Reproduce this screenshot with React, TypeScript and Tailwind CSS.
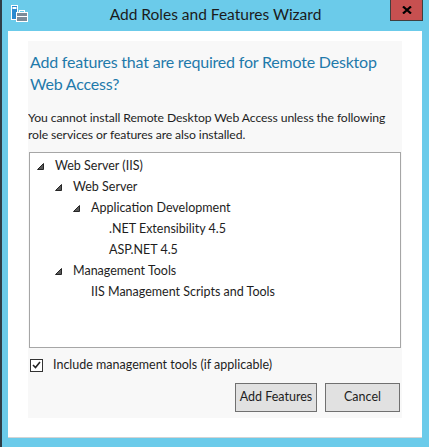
import React from 'react';

const font = { fontFamily: 'Lato, "Open Sans", sans-serif' };

interface Row {
  label: string;
  level: number;
  expandable: boolean;
}

const rows: Row[] = [
  { label: 'Web Server (IIS)', level: 0, expandable: true },
  { label: 'Web Server', level: 1, expandable: true },
  { label: 'Application Development', level: 2, expandable: true },
  { label: '.NET Extensibility 4.5', level: 3, expandable: false },
  { label: 'ASP.NET 4.5', level: 3, expandable: false },
  { label: 'Management Tools', level: 1, expandable: true },
  { label: 'IIS Management Scripts and Tools', level: 2, expandable: false },
];

const indent = ['pl-[7px]', 'pl-[25px]', 'pl-[43px]', 'pl-[61px]'];

function Expander() {
  return (
    <svg width="7" height="7" viewBox="0 0 7 7" className="shrink-0">
      <polygon points="6.5,0.5 6.5,6.5 0.5,6.5" fill="#595959" stroke="#262626" strokeWidth="1" />
    </svg>
  );
}

function AppIcon() {
  return (
    <svg width="18" height="18" viewBox="0 0 18 18">
      <rect x="1.5" y="0.5" width="6" height="14" fill="#2a8ad0" stroke="#fff" />
      <rect x="2.5" y="2" width="4" height="2" fill="#fff" />
      <rect x="6.5" y="7.5" width="11" height="9" fill="#7c8c99" stroke="#fff" />
      <rect x="9.5" y="5.5" width="5" height="2" fill="none" stroke="#fff" />
      <line x1="6.5" y1="11.5" x2="17.5" y2="11.5" stroke="#fff" />
    </svg>
  );
}

export default function App() {
  return (
    <div className="flex w-[429px] h-[447px] overflow-hidden" style={font}>
      <div className="w-[2px] shrink-0 bg-[#2f3d47]" />
      <div className="w-[427px] min-w-0 flex flex-col bg-[#6bcbea]">
        {/* title bar */}
        <div className="relative h-[31px] flex items-center justify-center">
          <div className="absolute left-[8px] top-[5px]">
            <AppIcon />
          </div>
          <span className="text-[15.5px] text-[#1b1b1b] -mt-[2px]">Add Roles and Features Wizard</span>
          <div className="absolute right-[6px] top-0 w-[33px] h-[21px] bg-[#c75050] border border-[#3f3f3f] border-t-0 flex items-center justify-center">
            <svg width="10" height="8" viewBox="0 0 10 8">
              <path d="M1 0.5 L9 7.5 M9 0.5 L1 7.5" stroke="#000" strokeWidth="2.2" />
            </svg>
          </div>
        </div>

        {/* client */}
        <div className="ml-[6px] w-[414px] h-[407px] bg-white border-b border-[#d4d4d4] pt-[10px] px-[20px] pb-[19px]">
          <div className="h-full w-[374px] bg-[#f8f8f8] flex flex-col pt-[10px] overflow-hidden">
            <h1 className="text-[16px] leading-[22px] tracking-[-0.2px] text-[#1f7aab] pl-[2px] whitespace-nowrap">
              Add features that are required for Remote Desktop
              <br />
              Web Access?
            </h1>
            <p className="mt-[14px] text-[12.2px] leading-[17px] tracking-[-0.1px] text-[#1e1e1e] whitespace-nowrap">
              You cannot install Remote Desktop Web Access unless the following
              <br />
              role services or features are also installed.
            </p>

            <div className="mt-[9px] mx-[1px] h-[196px] bg-white border border-[#a6a6a6] pt-[3px]">
              {rows.map((r) => (
                <div key={r.label} className={`h-[21px] flex items-center text-[12.5px] text-[#1e1e1e] ${indent[r.level]}`}>
                  <span className="w-[18px] flex items-center">{r.expandable && <Expander />}</span>
                  <span>{r.label}</span>
                </div>
              ))}
            </div>

            <label className="mt-[8px] ml-[2px] flex items-center gap-[10px] text-[12.5px] text-[#1e1e1e]">
              <span className="w-[13px] h-[13px] border border-[#333] bg-white flex items-center justify-center">
                <svg width="9" height="8" viewBox="0 0 9 8">
                  <path d="M1 4 L3.5 6.5 L8 1" fill="none" stroke="#222" strokeWidth="1.6" />
                </svg>
              </span>
              Include management tools (if applicable)
            </label>

            <div className="mt-[8px] flex justify-end gap-[8px] pr-[2px]">
              <button className="w-[82px] h-[29px] bg-[#e1e1e1] border border-[#707070] text-[12.5px] text-[#1e1e1e]">
                Add Features
              </button>
              <button className="w-[75px] h-[29px] bg-[#e1e1e1] border border-[#707070] text-[12.5px] text-[#1e1e1e]">
                Cancel
              </button>
            </div>
          </div>
        </div>
      </div>
    </div>
  );
}
